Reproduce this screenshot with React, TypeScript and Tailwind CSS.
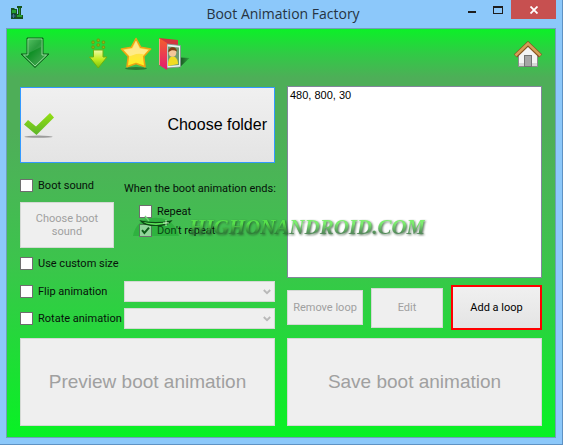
import type { ReactNode } from 'react';

interface CheckFieldProps {
  id: string;
  label: string;
  defaultChecked?: boolean;
}

function CheckField({ id, label, defaultChecked }: CheckFieldProps) {
  return (
    <div className="flex h-[13px] items-center gap-[5px]">
      <span className="relative flex">
        <input
          id={id}
          type="checkbox"
          defaultChecked={defaultChecked}
          className="peer h-[13px] w-[13px] appearance-none border border-[#6e6e6e] bg-white checked:bg-[#d8f4da]"
        />
        <svg
          viewBox="0 0 13 13"
          className="pointer-events-none absolute inset-0 hidden h-[13px] w-[13px] peer-checked:block"
        >
          <path d="M3 6.2 5.4 9 10 3.6" fill="none" stroke="#0d3a14" strokeWidth="2" />
        </svg>
      </span>
      <label htmlFor={id} className="whitespace-nowrap">
        {label}
      </label>
    </div>
  );
}

function DisabledSelect({ id, label }: { id: string; label: string }) {
  return (
    <div className="relative">
      <select
        id={id}
        aria-label={label}
        disabled
        className="block h-[21px] w-full appearance-none border border-[#d4d9d4] bg-[#efefef]"
      />
      <svg viewBox="0 0 8 6" className="pointer-events-none absolute top-[8px] right-[4px] h-[6px] w-[8px]">
        <path d="M0.8 1 4 4.2 7.2 1" fill="none" stroke="#b9b9b9" strokeWidth="1.9" />
      </svg>
    </div>
  );
}

function ToolButton({ label, children }: { label: string; children: ReactNode }) {
  return (
    <button type="button" aria-label={label} className="block">
      {children}
    </button>
  );
}

function AppIcon() {
  return (
    <svg viewBox="0 0 14 14" className="h-[14px] w-[14px]">
      <path d="M1 2h3l1 1h2v5h1V2H7V0h5v2h-1v7h2v4H1z" fill="#17551f" />
      <path d="M2 4h4v3H2zM9 2h1v7h2v2H7V9h2z" fill="#27a032" />
      <circle cx="3.5" cy="10" r="2.4" fill="#133c48" />
      <path d="M3.5 8v4M1.5 10h4" stroke="#4f8694" strokeWidth="0.8" />
    </svg>
  );
}

function BigArrowIcon() {
  return (
    <svg viewBox="0 0 30 32" className="h-8 w-[30px]">
      <defs>
        <linearGradient id="bigArrow" x1="0" y1="0" x2="1" y2="1">
          <stop offset="0" stopColor="#4fc95d" />
          <stop offset="0.42" stopColor="#0e8f24" />
          <stop offset="0.65" stopColor="#2f9c40" />
          <stop offset="1" stopColor="#46b350" />
        </linearGradient>
      </defs>
      <path d="M7 1h16v16h6L15 30.500 1 17h6z" fill="url(#bigArrow)" stroke="#0d5c1b" />
      <path d="M8 2h14v16h4.500L15 29 3.500 18H8z" fill="none" stroke="#9fe3a3" strokeOpacity="0.85" />
      <path d="M9 3h12v7L9 16z" fill="#fff" fillOpacity="0.120" />
    </svg>
  );
}

function SmallArrowIcon() {
  return (
    <svg viewBox="0 0 20 32" className="h-8 w-5">
      <defs>
        <linearGradient id="smallArrow" x1="0" y1="0" x2="0" y2="1">
          <stop offset="0" stopColor="#effaa8" />
          <stop offset="0.5" stopColor="#c6ec20" />
          <stop offset="1" stopColor="#76c40c" />
        </linearGradient>
      </defs>
      <g fill="#8fc010" stroke="#7c8a10" strokeWidth="0.900">
        <rect x="9" y="1" width="2.500" height="2.500" rx="1" />
        <rect x="3.800" y="3" width="2.500" height="2.500" rx="1" />
        <rect x="14.200" y="3" width="2.500" height="2.500" rx="1" />
        <rect x="9" y="5.800" width="2.500" height="2.500" rx="1" />
        <rect x="3.800" y="8" width="2.500" height="2.500" rx="1" />
        <rect x="14.200" y="8" width="2.500" height="2.500" rx="1" />
      </g>
      <path d="M5.500 12h9.500v7H19L10.200 30 1.500 19h4z" fill="url(#smallArrow)" stroke="#6eb010" />
    </svg>
  );
}

function StarIcon() {
  return (
    <svg viewBox="0 0 32 34" className="h-[34px] w-8">
      <defs>
        <linearGradient id="star" x1="0" y1="0" x2="0" y2="1">
          <stop offset="0" stopColor="#ffd653" />
          <stop offset="0.5" stopColor="#ffe04a" />
          <stop offset="1" stopColor="#fff41a" />
        </linearGradient>
      </defs>
      <ellipse cx="16" cy="31.500" rx="11" ry="1.500" fill="#17401c" fillOpacity="0.5" />
      <path
        d="M16 1.500 20.600 10.200 30.600 12 23.700 19.500 25 29.800 16 26.600 7 29.800 8.300 19.500 1.400 12 11.400 10.200z"
        fill="url(#star)"
        stroke="#eda414"
        strokeWidth="1.600"
        strokeLinejoin="round"
      />
      <path d="M16 4 19.500 11.500 28 13 24 17.500C17 15 12 19 9.500 19L4 13l8.500-1.500z" fill="#fff" fillOpacity="0.350" />
    </svg>
  );
}

function AlbumIcon() {
  return (
    <svg viewBox="0 0 32 34" className="h-[34px] w-8">
      <defs>
        <linearGradient id="album" x1="0" y1="0" x2="0" y2="1">
          <stop offset="0" stopColor="#f4602c" />
          <stop offset="1" stopColor="#e31a72" />
        </linearGradient>
        <linearGradient id="albumShadow" x1="0" y1="0" x2="1" y2="0">
          <stop offset="0" stopColor="#12401a" stopOpacity="0.9" />
          <stop offset="1" stopColor="#12401a" stopOpacity="0.25" />
        </linearGradient>
      </defs>
      <path d="M21 31 31.500 21l-9-0.500z" fill="url(#albumShadow)" />
      <path d="M1 1 20 3v26L8 32z" fill="#d2353f" />
      <path d="M9 7 22.500 8.500V30L9 31z" fill="#e6f2ee" stroke="#7d918b" strokeWidth="0.800" />
      <path d="M10 9.500 21 10.500V28L10 29z" fill="#6f9a70" />
      <path d="M10 28c0-6 2-8.500 4.800-8.500S20 22 20 27l-10 2z" fill="#f1dc23" />
      <ellipse cx="14.500" cy="15.500" rx="3.800" ry="4.200" fill="#f5c79a" />
      <path d="M10.300 15.500c0-7 8.400-6.500 8.700-1-3-1.500-5.500-2-8.700 1z" fill="#7d3c13" />
      <path d="M1 1 9 6v27L1 28z" fill="url(#album)" />
      <path d="M1.500 2v26" stroke="#ffb08e" strokeWidth="0.800" />
    </svg>
  );
}

function HomeIcon() {
  return (
    <svg viewBox="0 0 28 28" className="h-7 w-7">
      <path d="M4.500 13 14 4.500 23.500 13v12.500h-19z" fill="#f4f4f4" stroke="#8b8b8b" />
      <path d="M5 22h18v3H5z" fill="#d7d7d7" />
      <rect x="10.500" y="14.500" width="7" height="11" fill="#a6a6a6" stroke="#747474" />
      <path d="M1.500 15 14 3 26.500 15" fill="none" stroke="#875320" strokeWidth="4.500" />
      <path d="M1.500 14.500 14 2.500 26.500 14.500" fill="none" stroke="#d49e58" strokeWidth="2.600" />
    </svg>
  );
}

function TickIcon() {
  return (
    <svg viewBox="0 0 32 27" className="h-[27px] w-8">
      <defs>
        <linearGradient id="tick" x1="0" y1="0" x2="0" y2="1">
          <stop offset="0" stopColor="#95e012" />
          <stop offset="1" stopColor="#5cb52a" />
        </linearGradient>
      </defs>
      <ellipse cx="15.500" cy="24.700" rx="14" ry="1.100" fill="#9b9b9b" />
      <path d="M1 12.500 5 8 13 14.500 27 1 31 5.500 13.500 23z" fill="url(#tick)" />
    </svg>
  );
}

const disabledButton = 'border border-[#d4d9d4] bg-[#efefef] text-[#a0a0a0]';

export default function App() {
  return (
    <div className="bg-white pr-px pb-px font-[Roboto,'Liberation_Sans',sans-serif] text-[11px] leading-[13px] text-[#06120a]">
      <div className="border-r border-b border-[#5e92c4] bg-[#8cc8fa] pr-[6px] pb-[6px] pl-[6px]">
        <header className="flex h-7 items-start">
          <div className="flex flex-1 pt-[6px] pl-1">
            <AppIcon />
          </div>
          <h1 className="pt-1 font-['Open_Sans',sans-serif] text-[14px] leading-[20px] text-[#263442]">
            Boot Animation Factory
          </h1>
          <div className="flex flex-1 justify-end">
            <button type="button" aria-label="Minimize" className="flex h-[19px] w-[26px] items-center justify-center">
              <svg viewBox="0 0 8 10" className="h-[10px] w-2">
                <path d="M0 6h8v2H0z" fill="#1e1e1e" />
              </svg>
            </button>
            <button type="button" aria-label="Maximize" className="flex h-[19px] w-[26px] items-center justify-center">
              <svg viewBox="0 0 10 8" className="h-2 w-[10px]">
                <path d="M0 0h10v8H0zM1 2v5h8V2z" fill="#1e1e1e" fillRule="evenodd" />
              </svg>
            </button>
            <button
              type="button"
              aria-label="Close"
              className="flex h-[19px] w-[45px] items-center justify-center bg-[#c75050]"
            >
              <svg viewBox="0 0 8 8" className="h-2 w-2">
                <path d="M0.500 0.500 7.500 7.500M7.500 0.500 0.500 7.500" stroke="#fff" strokeWidth="1.800" />
              </svg>
            </button>
          </div>
        </header>

        <main className="border border-[#6fa0b8] bg-[linear-gradient(to_bottom,#0cf028_0%,#30cb45_6%,#4eae58_12%,#4eae58_25%,#4ab556_36%,#3cc44c_57%,#24d83a_76%,#08f224_100%)] px-[13px] pb-[11px]">
          <nav className="flex h-[57px] items-start pt-2">
            <ToolButton label="Load">
              <BigArrowIcon />
            </ToolButton>
            <div className="ml-[38px] flex gap-3">
              <ToolButton label="Download">
                <SmallArrowIcon />
              </ToolButton>
              <div className="flex gap-[6px]">
                <ToolButton label="Favorites">
                  <StarIcon />
                </ToolButton>
                <ToolButton label="Gallery">
                  <AlbumIcon />
                </ToolButton>
              </div>
            </div>
            <div className="ml-auto pt-1">
              <ToolButton label="Home">
                <HomeIcon />
              </ToolButton>
            </div>
          </nav>

          <div className="relative grid grid-cols-2 gap-x-3 gap-y-2">
            <section className="pt-px">
              <button
                type="button"
                className="flex h-[76px] w-full items-center justify-between border border-[#3399ff] bg-linear-to-b from-[#f0f0f0] to-[#e4e4e4] pr-[7px] pl-[2px] font-['Liberation_Sans',sans-serif] text-[16px] leading-5 text-black"
              >
                <TickIcon />
                Choose folder
              </button>

              <div className="mt-4 grid grid-cols-[94px_1fr] gap-x-[10px]">
                <div>
                  <CheckField id="boot-sound" label="Boot sound" />
                  <button type="button" disabled className={`mt-[10px] h-[46px] w-full px-3 ${disabledButton}`}>
                    Choose boot sound
                  </button>
                </div>
                <fieldset className="pt-[3px]">
                  <legend className="float-left mb-[10px] whitespace-nowrap">When the boot animation ends:</legend>
                  <div className="clear-both flex flex-col gap-[6px] pl-[15px]">
                    <CheckField id="repeat" label="Repeat" />
                    <CheckField id="dont-repeat" label="Don't repeat" defaultChecked />
                  </div>
                </fieldset>
              </div>

              <div className="mt-[9px]">
                <CheckField id="custom-size" label="Use custom size" />
              </div>
              <div className="mt-[11px] grid grid-cols-[104px_1fr] items-center gap-y-[6px]">
                <CheckField id="flip" label="Flip animation" />
                <DisabledSelect id="flip-mode" label="Flip mode" />
                <CheckField id="rotate" label="Rotate animation" />
                <DisabledSelect id="rotate-mode" label="Rotate mode" />
              </div>
            </section>

            <section>
              <textarea
                aria-label="Loops"
                defaultValue="480, 800, 30"
                className="block h-[192px] w-full resize-none border border-[#82879a] bg-white px-[2px] pt-[2px] font-['Liberation_Sans',sans-serif] text-black outline-none"
              />
              <div className="mt-[7px] grid grid-cols-[76fr_72fr_91fr] items-center gap-2">
                <button type="button" disabled className={`h-[35px] whitespace-nowrap ${disabledButton}`}>
                  Remove loop
                </button>
                <button type="button" disabled className={`h-10 ${disabledButton}`}>
                  Edit
                </button>
                <button
                  type="button"
                  className="h-[45px] border-2 border-[#ff0000] bg-linear-to-b from-[#f0f0f0] to-[#e4e4e4] text-black"
                >
                  Add a loop
                </button>
              </div>
            </section>

            <button
              type="button"
              disabled
              className={`h-[88px] font-['Liberation_Sans',sans-serif] text-[19px] leading-6 ${disabledButton}`}
            >
              Preview boot animation
            </button>
            <button
              type="button"
              disabled
              className={`h-[88px] font-['Liberation_Sans',sans-serif] text-[19px] leading-6 ${disabledButton}`}
            >
              Save boot animation
            </button>

            {/* watermark across both columns */}
            <div className="pointer-events-none absolute top-[129px] left-[112px] flex items-center gap-[9px]">
              <svg viewBox="0 0 48 24" className="h-6 w-12">
                <path d="M1 21C2 14 6 9 10 6c8-4 18-4 25-1 6 3 10 9 12 16z" fill="#0f9a22" fillOpacity="0.350" />
                <path d="M13 1 17 6" stroke="#6fd877" strokeWidth="1.400" />
                <path d="M9 6c9 2 20 2 30 0-5 6-25 6-30 0z" fill="#5ee45b" stroke="#0c4a14" strokeWidth="1.200" />
                <path d="M34 5v6M31 8h6" stroke="#d9ffd4" strokeWidth="0.800" />
              </svg>
              <span className="bg-linear-to-b from-[#5cea4a] from-35% to-[#2a6e32] to-75% bg-clip-text font-['Liberation_Serif',serif] text-[21px] leading-6 font-bold text-transparent italic opacity-80 drop-shadow-[1px_1px_1px_#244a28]">
                HIGHONANDROID.COM
              </span>
            </div>
          </div>
        </main>
      </div>
    </div>
  );
}
